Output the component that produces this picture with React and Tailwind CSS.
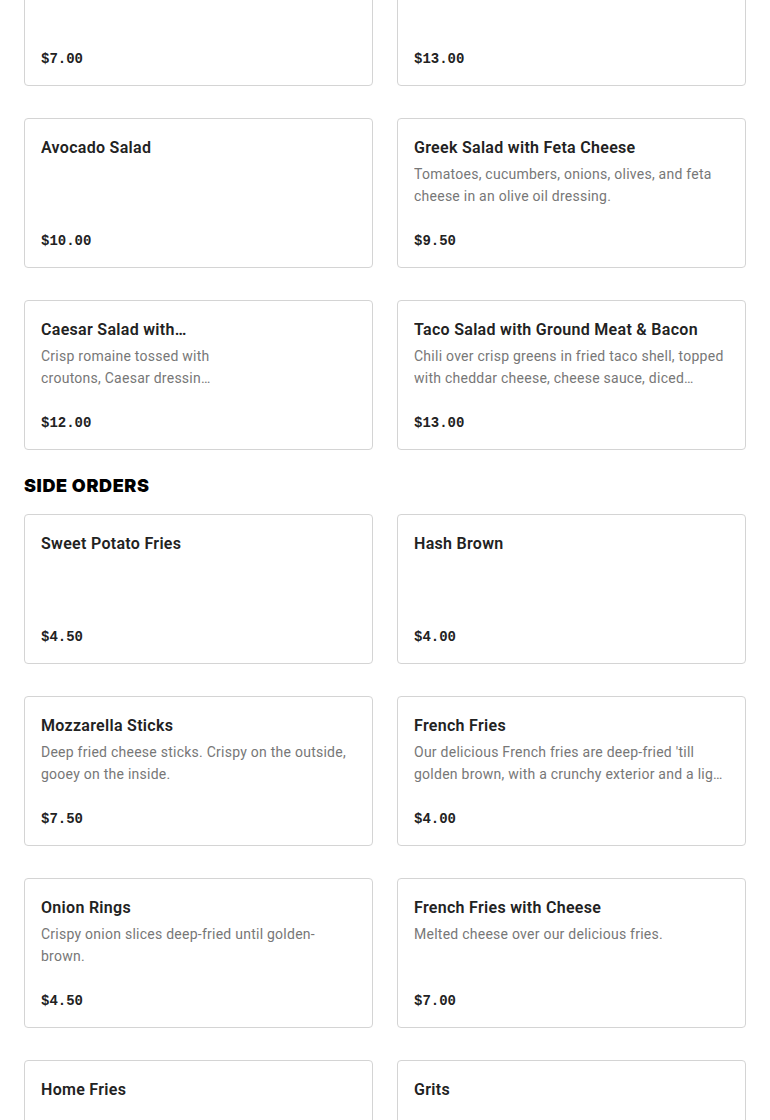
import React from "react";

const salads = [
  { name: "House Salad", price: "$7.00" },
  { name: "Chef Salad", price: "$13.00" },
  { name: "Avocado Salad", price: "$10.00" },
  {
    name: "Greek Salad with Feta Cheese",
    desc: "Tomatoes, cucumbers, onions, olives, and feta cheese in an olive oil dressing.",
    price: "$9.50",
  },
  {
    name: "Caesar Salad with Grilled Chicken",
    desc: "Crisp romaine tossed with croutons, Caesar dressing and parmesan cheese.",
    price: "$12.00",
    narrow: true,
  },
  {
    name: "Taco Salad with Ground Meat & Bacon",
    desc: "Chili over crisp greens in fried taco shell, topped with cheddar cheese, cheese sauce, diced tomatoes and onions.",
    price: "$13.00",
  },
];

const sides = [
  { name: "Sweet Potato Fries", price: "$4.50" },
  { name: "Hash Brown", price: "$4.00" },
  {
    name: "Mozzarella Sticks",
    desc: "Deep fried cheese sticks. Crispy on the outside, gooey on the inside.",
    price: "$7.50",
  },
  {
    name: "French Fries",
    desc: "Our delicious French fries are deep-fried 'till golden brown, with a crunchy exterior and a light fluffy interior.",
    price: "$4.00",
  },
  {
    name: "Onion Rings",
    desc: "Crispy onion slices deep-fried until golden-brown.",
    price: "$4.50",
  },
  {
    name: "French Fries with Cheese",
    desc: "Melted cheese over our delicious fries.",
    price: "$7.00",
  },
  { name: "Home Fries", price: "$4.00" },
  { name: "Grits", price: "$4.00" },
];

function Card({ item }) {
  return (
    <div className="h-[150px] flex flex-col border border-[#d4d4d4] rounded-[4px] bg-white p-4">
      <div className={item.narrow ? "w-[172px]" : "w-full"}>
        <h3 className="mt-px text-[16px] leading-6 font-semibold text-[#222] tracking-[0.3px] line-clamp-1">
          {item.name}
        </h3>
        {item.desc && (
          <p className="mt-[3px] text-[14px] leading-[22px] text-[#777] tracking-[0.25px] line-clamp-2">
            {item.desc}
          </p>
        )}
      </div>
      <p className="mt-auto text-[14px] leading-5 font-bold text-[#222] font-['Liberation_Mono',monospace]">
        {item.price}
      </p>
    </div>
  );
}

export default function App() {
  return (
    <div className="bg-white px-6 font-['Roboto',sans-serif] h-[1120px] overflow-hidden">
      <div className="grid grid-cols-2 gap-x-6 gap-y-8 -mt-[64px]">
        {salads.map((s) => (
          <Card key={s.name} item={s} />
        ))}
      </div>
      <h2 className="mt-6 mb-4 text-[18px] leading-6 font-black text-black tracking-[0.6px] font-['Inter',sans-serif]">
        SIDE ORDERS
      </h2>
      <div className="grid grid-cols-2 gap-x-6 gap-y-8">
        {sides.map((s) => (
          <Card key={s.name} item={s} />
        ))}
      </div>
    </div>
  );
}
